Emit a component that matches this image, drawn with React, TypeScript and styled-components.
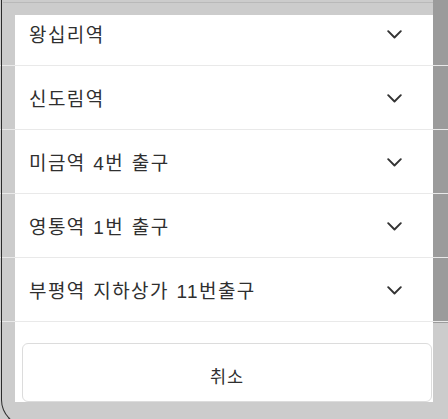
import React from 'react';
import styled, { createGlobalStyle } from 'styled-components';

const GlobalStyle = createGlobalStyle`
  html, body {
    margin: 0;
    padding: 0;
    background: #cccccc;
  }
  body {
    font-family: "Noto Sans CJK KR", "Noto Sans", sans-serif;
  }
`;

const Page = styled.div`
  position: relative;
  display: flex;
  width: 448px;
  height: 419px;
  overflow: hidden;
  background: #cccccc;

  /* device frame edge */
  &::before {
    content: '';
    position: absolute;
    left: 1px;
    top: -10px;
    bottom: -7px;
    width: 60px;
    border-left: 1.5px solid #2b2b2b;
    border-bottom: 1.5px solid #2b2b2b;
    border-bottom-left-radius: 26px;
    pointer-events: none;
    z-index: 3;
  }

  /* top border of the hidden first row */
  &::after {
    content: '';
    position: absolute;
    top: 2px;
    left: 3px;
    right: 15px;
    height: 1px;
    background: #b9b9b9;
  }
`;

const Gutter = styled.div`
  flex: 0 0 15px;
`;

const RightRail = styled.div`
  flex: 0 0 15px;
  background: linear-gradient(#9b9b9b 0 323px, #cccccc 323px);
`;

const Middle = styled.div`
  display: flex;
  flex-direction: column;
  width: 418px;
  padding-top: 15px;
`;

const Sheet = styled.div`
  display: flex;
  flex-direction: column;
  background: #ffffff;
`;

const Row = styled.div<{ $cut?: number }>`
  position: relative;
  display: flex;
  align-items: center;
  justify-content: space-between;
  box-sizing: border-box;
  height: ${p => 64 - (p.$cut || 0)}px;
  padding: 0 30px ${p => p.$cut || 0}px 14px;
  cursor: pointer;

  &::after {
    content: '';
    position: absolute;
    left: -15px;
    right: -15px;
    bottom: 0;
    height: 1px;
    background: #e9e9e9;
    z-index: 2;
  }
`;

const Label = styled.span`
  font-family: "Liberation Sans", "Noto Sans CJK KR", sans-serif;
  font-size: 19px;
  line-height: 24px;
  margin-top: 4px;
  color: #2f2f2f;
  letter-spacing: 1.4px;
  word-spacing: 1px;
`;

const Chevron = styled.svg`
  width: 15px;
  height: 9px;
  flex: none;
  margin-right: 1px;
`;

const Footer = styled.div`
  padding: 21px 1px 0 7px;
`;

const CancelButton = styled.button`
  display: block;
  width: 100%;
  height: 59px;
  box-sizing: border-box;
  padding: 5px 0 0;
  border: 1px solid #dcdcdc;
  border-radius: 6px;
  background: #ffffff;
  font-family: inherit;
  font-size: 17.5px;
  letter-spacing: 1px;
  color: #2f2f2f;
  cursor: pointer;
`;

const stations = ['왕십리역', '신도림역', '미금역 4번 출구', '영통역 1번 출구', '부평역 지하상가 11번출구'];

const ChevronDown = () => (
  <Chevron viewBox="0 0 15 9">
    <polyline points="1.2,1.2 7.5,7.5 13.8,1.2" fill="none" stroke="#333" strokeWidth="1.9" strokeLinecap="round" strokeLinejoin="round" />
  </Chevron>
);

const App: React.FC = () => {
  return (
    <>
      <GlobalStyle />
      <Page>
        <Gutter />
        <Middle>
          <Sheet>
            {stations.map((name, i) => (
              <Row key={name} $cut={i === 0 ? 13 : 0}>
                <Label>{name}</Label>
                <ChevronDown />
              </Row>
            ))}
            <Footer>
              <CancelButton>취소</CancelButton>
            </Footer>
          </Sheet>
        </Middle>
        <RightRail />
      </Page>
    </>
  );
};

export default App;
